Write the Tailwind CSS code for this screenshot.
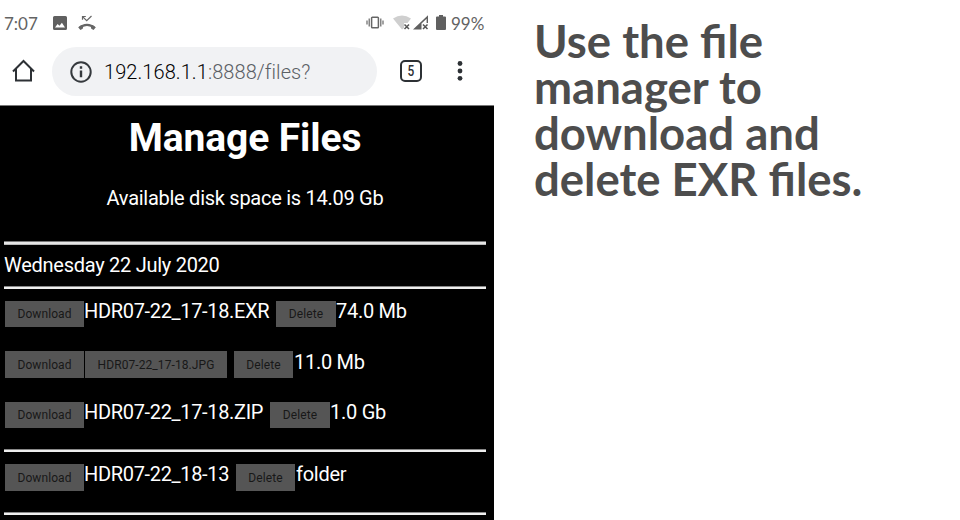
<!DOCTYPE html>
<html lang="en">
<head>
<meta charset="utf-8">
<title>Manage Files</title>
<script src="https://cdn.jsdelivr.net/npm/@tailwindcss/browser@4"></script>
</head>
<body class="flex h-[520px] w-[960px] overflow-hidden bg-white font-['Roboto',sans-serif]">
<main class="flex h-[520px] w-[494px] shrink-0 flex-col overflow-hidden bg-black">
  <header class="h-[106px] shrink-0 border-b border-[#777] bg-white">
    <div class="flex h-[46px] items-center pl-[4px] font-['Lato',sans-serif] text-[17px] text-[#636363]">
      <span class="w-[49px] pt-px">7:07</span>
      <svg class="h-[14px] w-[14px]" viewBox="0 0 14 14"><path fill="#606060" fill-rule="evenodd" d="M1.5 0h11A1.5 1.5 0 0 1 14 1.5v11a1.5 1.5 0 0 1-1.5 1.5h-11A1.500 1.500 0 0 1 0 12.500v-11A1.500 1.500 0 0 1 1.500 0ZM2 11.500h10L8.900 6.800 6.500 9.800 4.600 8Z"/></svg>
      <svg class="ml-[11px] h-[16px] w-[18px]" viewBox="0 0 18 16" fill="none"><path d="M1.500 13C5.500 8.700 12.500 8.700 16.500 13" stroke="#666" stroke-width="2.200"/><path d="m.2 12.300 3.200-2.400 2 1-.7 2.800-2.300 1.300ZM17.800 12.300l-3.200-2.400-2 1 .7 2.800 2.300 1.300Z" fill="#666"/><path d="M4.500 4.800V1.500h3.300M4.800 1.800 8.700 5.700 13.500 1" stroke="#666" stroke-width="1.200"/></svg>
      <svg class="ml-[270px] h-[14px] w-[18px]" viewBox="0 0 18 14" fill="none" stroke="#666" stroke-width="1.200"><rect x="5.600" y="1.300" width="6.800" height="10.400" rx=".8" stroke-width="1.500"/><path d="M1 4.500v4M3.200 2.500v8M17 4.500v4M14.800 2.500v8"/></svg>
      <svg class="ml-[9px] h-[16px] w-[18px]" viewBox="0 0 18 16"><path d="M0 3.500Q9-2.500 18 3.500L14.500 8H11v5l-2 1.500Z" fill="#cfcfcf"/><path d="m11.500 9.500 4.500 4.500m0-4.500-4.500 4.500" stroke="#555" stroke-width="1.500"/></svg>
      <svg class="ml-[2px] h-[16px] w-[16px]" viewBox="0 0 16 16"><path d="M0 14.500 15 .2V8h-1.400V3.700L8.500 8.500v6Z" fill="#606060"/><path d="m10 9.500 4.500 4.500m0-4.500L10 14" stroke="#555" stroke-width="1.500"/></svg>
      <svg class="ml-[7px] h-[16px] w-[10px]" viewBox="0 0 10 16"><path d="M3 0h4v1.500h2a1 1 0 0 1 1 1V14a1 1 0 0 1-1 1H1a1 1 0 0 1-1-1V2.500a1 1 0 0 1 1-1h2Z" fill="#606060"/></svg>
      <span class="ml-[5px] pt-px">99%</span>
    </div>
    <div class="flex h-[50px] items-center">
      <svg class="ml-[12px] h-[24px] w-[23px]" viewBox="0 0 23 24" fill="none" stroke="#2d3135" stroke-width="2"><path d="M1 12.500 11.500 2 22 12.500M4 10v11.500h15V10"/></svg>
      <div class="ml-[17px] flex h-[49px] w-[325px] items-center rounded-full bg-[#f1f2f4] pl-[18px] text-[20px] text-[#5b6065]">
        <svg class="mt-px h-[22px] w-[22px]" viewBox="0 0 22 22" fill="none" stroke="#35393d" stroke-width="2"><circle cx="11" cy="11" r="9.700"/><path d="M11 9.500V16.300M11 5.200v2.500" stroke-width="2.400"/></svg>
        <span class="ml-[12px] pt-[2px] font-light tracking-[0.07px]"><span class="text-black">192.168.1.1</span>:8888/files?</span>
      </div>
      <div class="ml-[23px] flex h-[22px] w-[22px] items-center justify-center rounded-[5px] border-2 border-[#2d3135] text-[14px] font-medium text-[#2d3135]"><span class="scale-x-85">5</span></div>
      <svg class="ml-[35px] h-[20px] w-[6px]" viewBox="0 0 6 20" fill="#2d3135"><circle cx="3" cy="2.500" r="2.400"/><circle cx="3" cy="10" r="2.400"/><circle cx="3" cy="17.300" r="2.400"/></svg>
    </div>
  </header>
  <section class="flex flex-col pl-[4px] pr-[8px] text-[20px] leading-5 tracking-[-0.27px] text-white">
    <h1 class="mt-[9px] h-[46px] text-center text-[39px] leading-[46px] font-bold tracking-[-0.1px]">Manage Files</h1>
    <p class="mt-[27px] text-center">Available disk space is 14.09 Gb</p>
    <div class="mt-[33px] h-[4px] border-y border-t-[#777] border-b-[#bbb] bg-[#e6e6e6]"></div>
    <h2 class="mt-[10px] h-[20px]">Wednesday 22 July 2020</h2>
    <div class="mt-[11px] h-[3px] border-t border-[#888] bg-[#eee]"></div>
    <div class="mt-[12px] flex h-[26px] pl-px whitespace-nowrap">
      <button class="w-[79px] bg-[#555] text-[12px] tracking-[0.08px] text-[#181818]">Download</button>
      <span class="w-[192px] tracking-[-0.33px]">HDR07-22_17-18.EXR</span>
      <button class="w-[60px] bg-[#555] text-[12px] tracking-[0.08px] text-[#181818]">Delete</button>
      <span>74.0 Mb</span>
    </div>
    <div class="mt-[24px] flex h-[27px] pl-px whitespace-nowrap">
      <button class="w-[79px] bg-[#555] text-[12px] tracking-[0.08px] text-[#181818]">Download</button>
      <button class="ml-px w-[142px] bg-[#555] text-[12px] tracking-[0.08px] text-[#181818]">HDR07-22_17-18.JPG</button>
      <button class="ml-[7px] w-[59px] bg-[#555] text-[12px] tracking-[0.08px] text-[#181818]">Delete</button>
      <span class="pt-px pl-px">11.0 Mb</span>
    </div>
    <div class="mt-[24px] flex h-[26px] pl-px whitespace-nowrap">
      <button class="w-[79px] bg-[#555] text-[12px] tracking-[0.08px] text-[#181818]">Download</button>
      <span class="w-[186px] tracking-[-0.33px]">HDR07-22_17-18.ZIP</span>
      <button class="w-[60px] bg-[#555] text-[12px] tracking-[0.08px] text-[#181818]">Delete</button>
      <span>1.0 Gb</span>
    </div>
    <div class="mt-[21px] h-[3px] border-t border-[#888] bg-[#eee]"></div>
    <div class="mt-[12px] flex h-[27px] pl-px whitespace-nowrap">
      <button class="w-[79px] bg-[#555] text-[12px] tracking-[0.08px] text-[#181818]">Download</button>
      <span class="w-[152px] tracking-[-0.33px]">HDR07-22_18-13</span>
      <button class="w-[59px] bg-[#555] text-[12px] tracking-[0.08px] text-[#181818]">Delete</button>
      <span class="pl-px">folder</span>
    </div>
    <div class="mt-[21px] h-[3px] border-t border-[#888] bg-[#eee]"></div>
  </section>
</main>
<aside class="pt-[18px] pl-[40px] font-['Lato',sans-serif] text-[45.5px] leading-[46px] font-bold text-[#4d4d4d]">
  <p>Use the file<br>manager to<br>download and<br>delete EXR files.</p>
</aside>
</body>
</html>
